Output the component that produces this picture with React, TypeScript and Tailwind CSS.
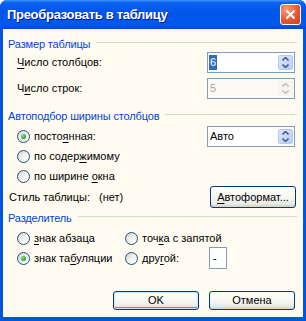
import type { ReactNode } from 'react'

function U({ children }: { children: ReactNode }) {
  return <span className="underline underline-offset-[2px] decoration-1">{children}</span>
}

function Radio({ checked }: { checked?: boolean }) {
  return (
    <span className="inline-flex h-[13px] w-[13px] shrink-0 items-center justify-center rounded-full border border-[#1c5180] bg-[linear-gradient(135deg,#d4d4cc,#f4f4f0_55%,#ffffff)]">
      {checked && (
        <span className="h-[5px] w-[5px] rounded-full bg-[radial-gradient(circle_at_35%_35%,#8be08b,#21a121_70%)]" />
      )}
    </span>
  )
}

function Arrow({ up, color }: { up?: boolean; color: string }) {
  return (
    <svg width="7" height="4" viewBox="0 0 7 4">
      <path d={up ? 'M0.5 3.5 L3.5 0.5 L6.5 3.5' : 'M0.5 0.5 L3.5 3.5 L6.5 0.5'} fill="none" stroke={color} strokeWidth="1.6" />
    </svg>
  )
}

function SpinBox({ value, selected, disabled }: { value: string; selected?: boolean; disabled?: boolean }) {
  return (
    <div
      className={`flex h-[21px] w-[88px] items-stretch border border-[#7f9db9] ${
        disabled ? 'bg-[#fbfaf5]' : 'bg-white'
      }`}
    >
      <div className="flex flex-1 items-center pl-[1px]">
        <span
          className={
            selected
              ? 'bg-[#316ac5] px-[1px] leading-[15px] text-white'
              : disabled
                ? 'px-[1px] text-[#aca899]'
                : 'px-[1px] text-black'
          }
        >
          {value}
        </span>
      </div>
      <div
        className={`my-[2px] mr-[1px] flex w-[15px] flex-col items-center justify-center gap-[3px] rounded-[2px] ${
          disabled ? 'bg-[#f6f5ef]' : 'border border-[#b4c8f6] bg-[linear-gradient(135deg,#dce6fc,#b9cdf8)]'
        }`}
      >
        <Arrow up color={disabled ? '#c5c4bb' : '#4d6185'} />
        <Arrow color={disabled ? '#c5c4bb' : '#4d6185'} />
      </div>
    </div>
  )
}

function GroupHeading({ label }: { label: string }) {
  return (
    <div className="-mr-[2px] flex h-[16px] items-center gap-[6px]">
      <span className="tracking-[-0.15px] text-[#0046d5]">{label}</span>
      <div className="mb-[4px] h-px flex-1 bg-[#cfdcc8]" />
    </div>
  )
}

function XpButton({ children, isDefault, h = 'h-[19px]' }: { children: ReactNode; isDefault?: boolean; h?: string }) {
  return (
    <div
      className={`flex ${h} w-[86px] items-center justify-center rounded-[3px] border border-[#003c74] bg-[linear-gradient(180deg,#ffffff,#f5f4ee_60%,#e3e1d6)] ${
        isDefault ? 'shadow-[inset_0_0_0_1px_#cee7ff,inset_0_-1px_0_1px_#6982ee]' : 'shadow-[inset_0_-2px_0_#dcd8cc]'
      }`}
    >
      {children}
    </div>
  )
}

export default function App() {
  return (
    <div className="h-[321px] w-[306px] overflow-hidden rounded-t-[7px] bg-[#0055e5] font-['Liberation_Sans',Arial,sans-serif] text-[11px] text-black">
      {/* title bar */}
      <div className="flex h-[29px] items-center justify-between bg-[linear-gradient(180deg,#3d95ff_0%,#0a5ff0_10%,#0055ea_45%,#0058ee_85%,#0047d8_100%)] pl-[7px] pr-[5px]">
        <span className="text-[13px] font-bold tracking-[-0.3px] text-white [text-shadow:1px_1px_0_#0a1a8c]">
          Преобразовать в таблицу
        </span>
        <div className="flex h-[21px] w-[21px] items-center justify-center rounded-[3px] border border-white bg-[radial-gradient(circle_at_30%_25%,#f49d7d,#e35a2f_55%,#c8401c)]">
          <svg width="11" height="11" viewBox="0 0 11 11">
            <path d="M1.5 1.5 L9.5 9.5 M9.5 1.5 L1.5 9.5" stroke="white" strokeWidth="2" />
          </svg>
        </div>
      </div>

      <div className="mx-[3px] h-[288px] bg-[#fffbf0] pl-[5px] pr-[8px] pt-[7px]">
        <GroupHeading label="Размер таблицы" />
        <div className="flex h-[21px] items-center justify-between pl-[9px]">
          <span>
            <U>Ч</U>исло столбцов:
          </span>
          <SpinBox value="6" selected />
        </div>
        <div className="mt-[5px] flex h-[21px] items-center justify-between pl-[9px]">
          <span>
            Ч<U>и</U>сло строк:
          </span>
          <SpinBox value="5" disabled />
        </div>

        <div className="mt-[9px]">
          <GroupHeading label="Автоподбор ширины столбцов" />
        </div>
        <div className="mt-[2px] flex h-[21px] items-center justify-between pl-[9px]">
          <div className="flex items-center gap-[4px]">
            <Radio checked />
            <span>
              посто<U>я</U>нная:
            </span>
          </div>
          <SpinBox value="Авто" />
        </div>
        <div className="-mt-px flex h-[20px] items-center gap-[4px] pl-[9px]">
          <Radio />
          <span>
            по содер<U>ж</U>имому
          </span>
        </div>
        <div className="flex h-[20px] items-center gap-[4px] pl-[9px]">
          <Radio />
          <span>
            по ширине <U>о</U>кна
          </span>
        </div>

        <div className="flex h-[22px] items-center justify-between pl-[1px]">
          <div className="flex items-center">
            <span className="w-[90px]">Стиль таблицы:</span>
            <span>(нет)</span>
          </div>
          <div className="mr-[-1px]">
            <XpButton h="h-[22px]">
              <span>
                <U>А</U>втоформат...
              </span>
            </XpButton>
          </div>
        </div>

        <div className="mt-[2px]">
          <GroupHeading label="Разделитель" />
        </div>
        <div className="mt-[2px] grid grid-cols-[108px_1fr] pl-[9px]">
          <div className="flex h-[20px] items-center gap-[4px]">
            <Radio />
            <span>
              <U>з</U>нак абзаца
            </span>
          </div>
          <div className="flex h-[20px] items-center gap-[4px]">
            <Radio />
            <span>
              точ<U>к</U>а с запятой
            </span>
          </div>
          <div className="flex h-[20px] items-center gap-[4px]">
            <Radio checked />
            <span>
              знак та<U>б</U>уляции
            </span>
          </div>
          <div className="flex h-[20px] items-center">
            <div className="flex items-center gap-[4px]">
              <Radio />
              <span>
                дру<U>г</U>ой:
              </span>
            </div>
            <div className="ml-[30px] flex h-[22px] w-[18px] items-center border border-[#7f9db9] bg-white pl-[3px]">
              -
            </div>
          </div>
        </div>

        <div className="mt-[23px] flex justify-end gap-[10px]">
          <XpButton isDefault>OK</XpButton>
          <XpButton>Отмена</XpButton>
        </div>
      </div>
    </div>
  )
}
